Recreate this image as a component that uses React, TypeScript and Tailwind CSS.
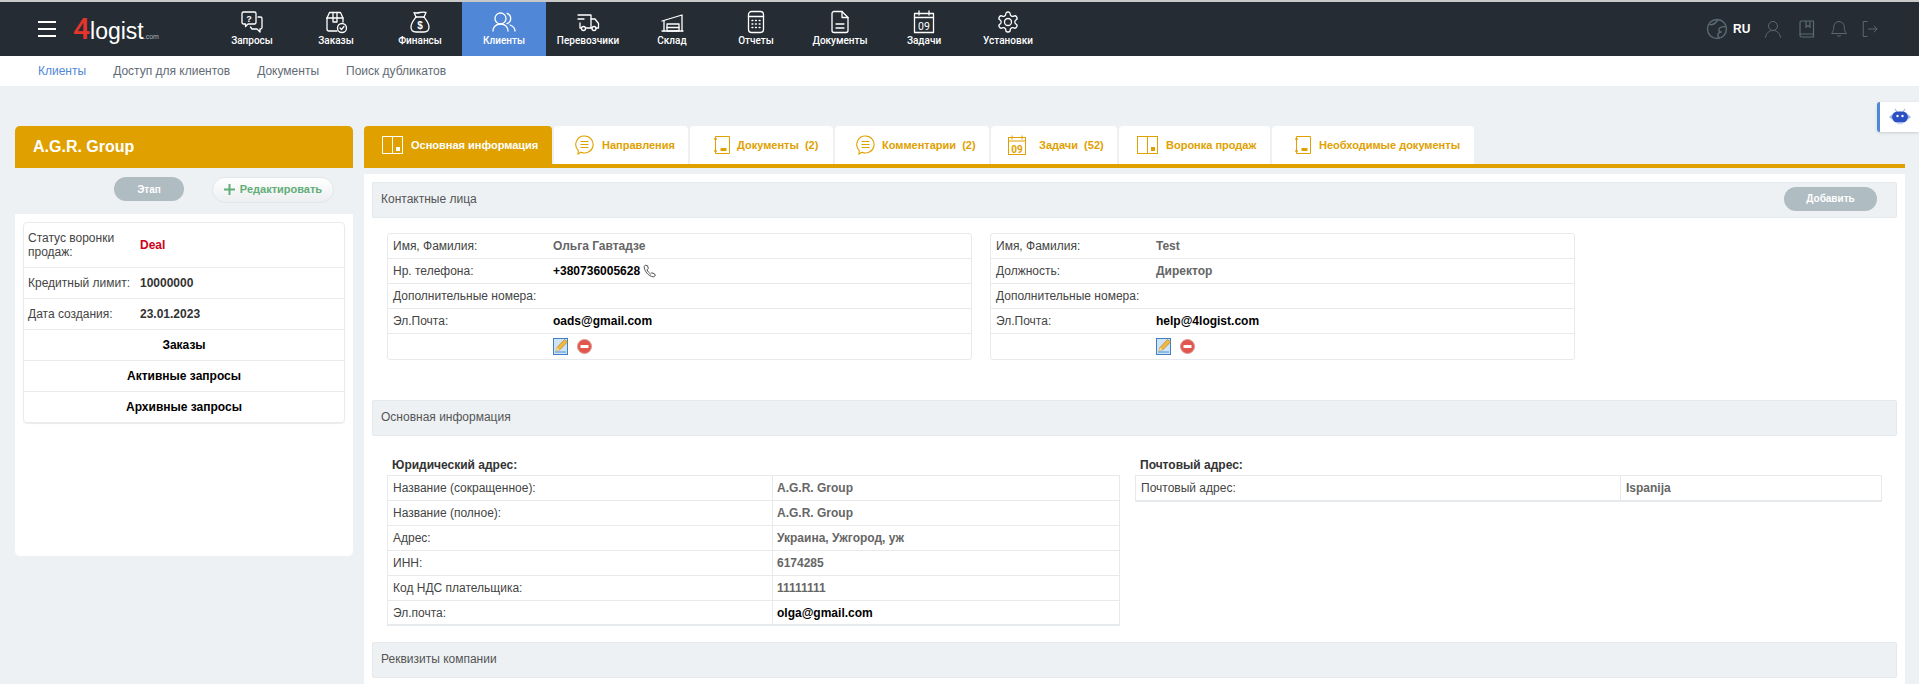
import type { ReactNode } from "react"

function Svg({ size, vb, className, children }: { size: number; vb?: string; className?: string; children: ReactNode }) {
  return (
    <svg width={size} height={size} viewBox={vb ?? "0 0 24 24"} fill="none" stroke="currentColor" strokeWidth={1.3} strokeLinecap="round" strokeLinejoin="round" className={className}>
      {children}
    </svg>
  )
}

const navIcons: Record<string, ReactNode> = {
  requests: (
    <Svg size={24}>
      <path d="M3.5 2h11a1.500 1.500 0 0 1 1.500 1.500v9a1.500 1.500 0 0 1-1.500 1.500H8l-2.500 2.500V14h-2A1.500 1.500 0 0 1 2 12.500v-9A1.500 1.500 0 0 1 3.500 2z" />
      <path d="M18 7h2.500A1.500 1.500 0 0 1 22 8.500v9a1.500 1.500 0 0 1-1.500 1.500H20v3l-3-3h-5l-1.500-2" />
      <text x="9" y="11.500" fontSize="9" fontWeight="700" fill="currentColor" stroke="none" textAnchor="middle" fontFamily="Liberation Sans, sans-serif">?</text>
    </Svg>
  ),
  orders: (
    <Svg size={24}>
      <path d="M3 8l2.500-5.500h11L19 8v4" />
      <path d="M3 8v11a2 2 0 0 0 2 2h8" />
      <path d="M3 8h16" />
      <path d="M9 2.500V12h4V2.500" />
      <circle cx="18" cy="18" r="4.500" />
      <path d="M16 18l1.500 1.500 2.500-3" />
    </Svg>
  ),
  finance: (
    <Svg size={24}>
      <path d="M8 7L6 2.500c2 1 4 .5 6 0s4-.5 6 0L16 7" />
      <path d="M8 7h8" />
      <path d="M8 7c-2 3-5 6-5 10 0 3 2 5 5 5h8c3 0 5-2 5-5 0-4-3-7-5-10" />
      <text x="12" y="19" fontSize="10" fontWeight="700" fill="currentColor" stroke="none" textAnchor="middle" fontFamily="Liberation Sans, sans-serif">$</text>
    </Svg>
  ),
  clients: (
    <Svg size={24}>
      <circle cx="8.500" cy="8.500" r="5.500" />
      <path d="M1 21c0-4 3-7 7.500-7s7.500 3 7.500 7" />
      <path d="M15 3.300a5.500 5.500 0 0 1 0 10.400" />
      <path d="M18 15c2.500 1 5 3 5 6" />
    </Svg>
  ),
  carriers: (
    <Svg size={24}>
      <path d="M2 5h13v13H9.500" />
      <path d="M2 9h6" />
      <path d="M4 13v5h1" />
      <path d="M15 9h4l3.500 4.500V18H20" />
      <path d="M15 18h1" />
      <circle cx="7.500" cy="18.500" r="2" />
      <circle cx="18" cy="18.500" r="2" />
    </Svg>
  ),
  warehouse: (
    <Svg size={24}>
      <path d="M2 11l20-6v16" />
      <path d="M2 21h21" />
      <path d="M4 11v10" />
      <path d="M7 14h12v7H7z" />
      <path d="M7 17.500h12" />
    </Svg>
  ),
  reports: (
    <Svg size={24}>
      <rect x="4.500" y="1.500" width="15" height="21" rx="3" />
      <path d="M4.500 6.500h15" />
      <path d="M8 10.500h.8M11.500 10.500h.8M15.200 10.500h.8M8 14h.8M11.500 14h.8M15.200 14h.8M8 17.500h.8M11.500 17.500h.8M15.200 17.500h.8" strokeWidth={1.5} />
    </Svg>
  ),
  documents: (
    <Svg size={24}>
      <path d="M6 1.500h8l6 6v13a2 2 0 0 1-2 2H6a2 2 0 0 1-2-2v-17a2 2 0 0 1 2-2z" />
      <path d="M14 1.500v6h6" />
      <path d="M8 14h8M8 18h8" />
    </Svg>
  ),
  tasks: (
    <Svg size={24}>
      <rect x="2.500" y="3.500" width="19" height="19" />
      <path d="M2.500 7.500h19" />
      <path d="M7 1v4M17 1v4" />
      <text x="12" y="19.500" fontSize="10.500" fill="currentColor" stroke="none" textAnchor="middle" fontFamily="Roboto, sans-serif">09</text>
    </Svg>
  ),
  settings: (
    <Svg size={24}>
      <path d="M12.220 2h-.44a2 2 0 0 0-2 2v.18a2 2 0 0 1-1 1.730l-.43.250a2 2 0 0 1-2 0l-.15-.080a2 2 0 0 0-2.730.730l-.22.380a2 2 0 0 0 .730 2.730l.150.100a2 2 0 0 1 1 1.720v.510a2 2 0 0 1-1 1.740l-.150.090a2 2 0 0 0-.730 2.730l.220.380a2 2 0 0 0 2.730.730l.150-.080a2 2 0 0 1 2 0l.430.250a2 2 0 0 1 1 1.730V20a2 2 0 0 0 2 2h.44a2 2 0 0 0 2-2v-.18a2 2 0 0 1 1-1.730l.430-.250a2 2 0 0 1 2 0l.150.080a2 2 0 0 0 2.730-.730l.220-.390a2 2 0 0 0-.730-2.730l-.150-.080a2 2 0 0 1-1-1.740v-.500a2 2 0 0 1 1-1.740l.150-.090a2 2 0 0 0 .730-2.730l-.220-.380a2 2 0 0 0-2.730-.730l-.150.080a2 2 0 0 1-2 0l-.430-.250a2 2 0 0 1-1-1.730V4a2 2 0 0 0-2-2z" />
      <circle cx="12" cy="12" r="3.500" />
    </Svg>
  ),
}

const navItems = [
  { key: "requests", label: "Запросы" },
  { key: "orders", label: "Заказы" },
  { key: "finance", label: "Финансы" },
  { key: "clients", label: "Клиенты", active: true },
  { key: "carriers", label: "Перевозчики" },
  { key: "warehouse", label: "Склад" },
  { key: "reports", label: "Отчеты" },
  { key: "documents", label: "Документы" },
  { key: "tasks", label: "Задачи" },
  { key: "settings", label: "Установки" },
]

function LayoutIcon() {
  return (
    <svg width={21} height={18} viewBox="0 0 21 18" fill="none" stroke="currentColor" strokeWidth={1}>
      <rect x="0.500" y="0.500" width="20" height="17" />
      <path d="M10.500 0.500v17" />
      <rect x="14" y="11" width="4" height="4" fill="currentColor" stroke="none" />
    </svg>
  )
}

function DocIcon() {
  return (
    <svg width={16} height={18} viewBox="0 0 16 18" fill="none" stroke="currentColor" strokeWidth={1}>
      <path d="M1.500 0.500h14v17h-14z" />
      <circle cx="1.500" cy="3" r="1.300" fill="currentColor" stroke="none" />
      <circle cx="1.500" cy="15" r="1.300" fill="currentColor" stroke="none" />
      <rect x="6.500" y="12" width="6" height="3" fill="currentColor" stroke="none" />
    </svg>
  )
}

function ChatIcon() {
  return (
    <svg width={20} height={20} viewBox="0 0 20 20" fill="none" stroke="currentColor" strokeWidth={1.1}>
      <path d="M10.500 1a8.500 8.500 0 1 1-3.500 16.200L4 19l.3-3.500A8.500 8.500 0 0 1 10.500 1z" />
      <path d="M6.500 6.500h8M6.500 9.500h8M6.500 12.500h8" />
    </svg>
  )
}

function CalIcon() {
  return (
    <svg width={18} height={20} viewBox="0 0 18 20" fill="none" stroke="currentColor" strokeWidth={1}>
      <rect x="0.500" y="2.500" width="17" height="17" />
      <path d="M0.500 6h17M4 0.500v4M14 0.500v4" />
      <text x="9" y="17.500" fontSize="10" fill="currentColor" stroke="none" textAnchor="middle" fontFamily="Roboto, sans-serif">09</text>
    </svg>
  )
}

const tabs = [
  { label: "Основная информация", w: "w-[188px]", pl: "pl-[18px]", gap: "gap-[8px]", icon: <LayoutIcon />, active: true },
  { label: "Направления", w: "w-[134px]", pl: "pl-[20px]", gap: "gap-[8px]", icon: <ChatIcon /> },
  { label: "Документы  (2)", w: "w-[143px]", pl: "pl-[24px]", gap: "gap-[7px]", icon: <DocIcon /> },
  { label: "Комментарии  (2)", w: "w-[154px]", pl: "pl-[20px]", gap: "gap-[7px]", icon: <ChatIcon /> },
  { label: "Задачи  (52)", w: "w-[126px]", pl: "pl-[17px]", gap: "gap-[13px]", icon: <CalIcon /> },
  { label: "Воронка продаж", w: "w-[151px]", pl: "pl-[18px]", gap: "gap-[8px]", icon: <LayoutIcon /> },
  { label: "Необходимые документы", w: "w-[202px]", pl: "pl-[23px]", gap: "gap-[8px]", icon: <DocIcon /> },
]

function EditIcon() {
  return (
    <svg width={16} height={17} viewBox="0 0 16 17">
      <rect x="0.500" y="0.500" width="14" height="16" fill="#cfe3f7" stroke="#3f7fc4" />
      <rect x="2" y="13" width="11" height="2" fill="#8dbbe8" />
      <path d="M3 13l1-3.500L11.500 1.500 14.500 4 6.500 12z" fill="#eeb93e" stroke="#b9812a" strokeWidth={0.7} />
      <path d="M3 13l1-3.500 2.500 2.500z" fill="#f7e2b0" />
    </svg>
  )
}

function StopIcon() {
  return (
    <svg width={15} height={15} viewBox="0 0 15 15">
      <circle cx="7.500" cy="7.500" r="7" fill="#e2574c" stroke="#d99a94" strokeWidth={1} />
      <rect x="3.500" y="6" width="8" height="3" fill="#fff" />
    </svg>
  )
}

function PhoneIcon() {
  return (
    <svg width={14} height={14} viewBox="0 0 24 24" fill="none" stroke="#444" strokeWidth={1.6} strokeLinejoin="round">
      <path d="M4 2l4 1 1 5-2 2c1 3 3 5 6 7l2-2 5 2 1 3-3 2C9 21 2 12 2 4z" />
    </svg>
  )
}

function SectionHeader({ title, action }: { title: string; action?: string }) {
  return (
    <div className="flex h-[36px] items-center justify-between rounded-[2px] border border-[#e4e9ec] bg-[#edf1f4] pb-[3px] pl-[8px] pr-[19px] text-[12px] text-[#555]">
      <span>{title}</span>
      {action && (
        <button type="button" className="h-[24px] w-[93px] rounded-full bg-[#afbcc1] text-[10px] font-bold text-white">
          {action}
        </button>
      )}
    </div>
  )
}

function ContactCard({ rows }: { rows: { label: string; value?: string; strong?: boolean; phone?: boolean }[] }) {
  return (
    <div className="w-[585px] rounded-[3px] border border-[#e6eaed] text-[12px] text-[#444]">
      {rows.map((r) => (
        <div key={r.label} className="flex h-[25px] items-center border-b border-[#e6eaed] pl-[5px]">
          <span className="w-[160px]">{r.label}</span>
          {r.value && (
            <span className={r.strong ? "flex items-center gap-[3px] font-bold text-black" : "font-bold text-[#666]"}>
              {r.value}
              {r.phone && <PhoneIcon />}
            </span>
          )}
        </div>
      ))}
      <div className="flex h-[25px] items-center gap-[8px] pl-[165px]">
        <EditIcon />
        <StopIcon />
      </div>
    </div>
  )
}

const legalRows = [
  { label: "Название (сокращенное):", value: "A.G.R. Group" },
  { label: "Название (полное):", value: "A.G.R. Group" },
  { label: "Адрес:", value: "Украина, Ужгород, уж" },
  { label: "ИНН:", value: "6174285" },
  { label: "Код НДС плательщика:", value: "11111111" },
  { label: "Эл.почта:", value: "olga@gmail.com", strong: true },
]

const sideRows = [
  { label: "Кредитный лимит:", value: "10000000" },
  { label: "Дата создания:", value: "23.01.2023" },
]

export default function App() {
  return (
    <div className="h-[684px] w-full overflow-hidden bg-[#edf1f4] font-['Liberation_Sans',Arial,sans-serif]">
      <div className="h-[2px] bg-[#c9c9c9]" />
      <header className="flex h-[54px] items-stretch bg-[#252c33] text-white">
        <div className="flex w-[210px] shrink-0 items-center pl-[38px]">
          <div className="flex w-[18px] flex-col gap-[5px]">
            <span className="h-[2px] bg-white" />
            <span className="h-[2px] bg-white" />
            <span className="h-[2px] bg-white" />
          </div>
          <div className="ml-[17px] flex items-baseline leading-none">
            <span className="font-['Roboto',sans-serif] text-[30px] font-medium text-[#e5352b]">4</span>
            <span className="text-[23px] text-white">logist</span>
            <span className="text-[7px] text-[#aab2b8]">.com</span>
          </div>
        </div>
        {navItems.map((item) => (
          <div key={item.key} className={"flex w-[84px] flex-col items-center pt-[8px] " + (item.active ? "bg-[#5187d7]" : "")}>
            {navIcons[item.key]}
            <span className="font-['Roboto',sans-serif] text-[10px] font-medium leading-[14px] whitespace-nowrap">{item.label}</span>
          </div>
        ))}
        <div className="ml-auto flex items-center pr-[40px] text-[#5b6a75]">
          <svg width={22} height={22} viewBox="0 0 22 22" fill="none" stroke="currentColor" strokeWidth={1.4}>
            <circle cx="11" cy="11" r="9.500" />
            <path d="M3 6c4 3 7-2 9-4M20 9c-3-1-6 0-7 2s1 3 2 3-2 0-3 2 1 4 2 4" />
          </svg>
          <span className="ml-[5px] w-[31px] text-[12px] font-bold text-white">RU</span>
          <Svg size={18}>
            <circle cx="12" cy="8" r="6" />
            <path d="M2 23c1-6 5-9 10-9s9 3 10 9" />
          </Svg>
          <svg width={16} height={18} viewBox="0 0 16 18" fill="none" stroke="currentColor" strokeWidth={1.2} className="ml-[17px]">
            <path d="M2.500 1h12v13h-12a1.500 1.500 0 0 0 0 3h12v-3M1 15.500V2.500A1.500 1.500 0 0 1 2.500 1" />
            <path d="M7 1v6l2-1.500L11 7V1" />
          </svg>
          <Svg size={18} className="ml-[15px]">
            <path d="M12 2a7 7 0 0 0-7 7c0 6-3 9-3 9h20s-3-3-3-9a7 7 0 0 0-7-7z" />
            <path d="M9.500 20.500a3 3 0 0 0 5 0" />
          </Svg>
          <Svg size={18} className="ml-[13px]">
            <path d="M8 2H3v20h5" />
            <path d="M10 12h11M17.500 8l4 4-4 4" />
          </Svg>
        </div>
      </header>
      <nav className="flex h-[30px] items-center bg-white pl-[38px] text-[12px] text-[#5f6b75]">
        <span className="text-[#5187d7]">Клиенты</span>
        <span className="ml-[27px]">Доступ для клиентов</span>
        <span className="ml-[27px]">Документы</span>
        <span className="ml-[27px]">Поиск дубликатов</span>
      </nav>
      <div className="relative flex gap-[11px] pl-[15px] pt-[40px]">
        <div className="absolute right-0 top-[16px] flex h-[30px] w-[42px] items-center justify-center rounded-l-[3px] border-l-[3px] border-[#5187d7] bg-white shadow-[0_1px_3px_rgba(0,0,0,0.15)]">
          <svg width={24} height={18} viewBox="0 0 22 18">
            <path d="M0 9l3-2.500v5zM22 9l-3-2.500v5z" fill="#9db6ea" />
            <path d="M6 1l2 3M16 1l-2 3" stroke="#9db6ea" strokeWidth={1.2} />
            <rect x="3" y="3.500" width="16" height="11" rx="5.500" fill="#2a50c4" />
            <circle cx="8.500" cy="8" r="1.200" fill="#fff" />
            <circle cx="13.500" cy="8" r="1.200" fill="#fff" />
            <path d="M8 15.500h6" stroke="#cbd7f5" strokeWidth={1.5} />
          </svg>
        </div>
        <aside className="w-[338px] shrink-0">
          <div className="flex h-[42px] items-center rounded-t-[5px] bg-[#e0a100] pl-[18px] text-[16px] font-bold text-white">A.G.R. Group</div>
          <div className="flex h-[46px] items-start gap-[28px] pl-[99px] pt-[9px]">
            <button type="button" className="h-[24px] w-[70px] rounded-full bg-[#afbcc1] text-[10px] font-bold text-white">Этап</button>
            <button type="button" className="flex h-[26px] w-[122px] items-center justify-center gap-[5px] rounded-full border border-[#e3e7ea] bg-gradient-to-b from-white to-[#eceef0] pb-[2px] text-[11px] font-bold text-[#62ad77]">
              <svg width={11} height={11} viewBox="0 0 11 11" stroke="currentColor" strokeWidth={2}>
                <path d="M5.500 0v11M0 5.500h11" />
              </svg>
              Редактировать
            </button>
          </div>
          <div className="h-[342px] rounded-b-[5px] bg-white px-[8px] pt-[8px]">
            <div className="rounded-[4px] border border-[#e8ecef] text-[12px] text-[#444] shadow-[0_1px_1px_rgba(0,0,0,0.08)]">
              <div className="flex h-[45px] items-center border-b border-[#e8ecef] pl-[4px]">
                <span className="w-[112px] leading-[14px]">Статус воронки<br />продаж:</span>
                <span className="font-bold text-[#d0021b]">Deal</span>
              </div>
              {sideRows.map((r) => (
                <div key={r.label} className="flex h-[31px] items-center border-b border-[#e8ecef] pl-[4px]">
                  <span className="w-[112px] whitespace-nowrap">{r.label}</span>
                  <span className="font-bold text-[#333]">{r.value}</span>
                </div>
              ))}
              {["Заказы", "Активные запросы", "Архивные запросы"].map((label, i) => (
                <div key={label} className={"flex items-center justify-center font-bold text-black " + (i < 2 ? "h-[31px] border-b border-[#e8ecef]" : "h-[30px]")}>
                  {label}
                </div>
              ))}
            </div>
          </div>
        </aside>
        <main className="w-[1541px] shrink-0">
          <div className="flex h-[38px] gap-[2px]">
            {tabs.map((tab) => (
              <div
                key={tab.label}
                className={
                  "flex items-center whitespace-pre rounded-t-[4px] text-[11px] font-bold " +
                  tab.w + " " + tab.pl + " " + tab.gap + " " +
                  (tab.active ? "bg-[#e0a100] text-white" : "bg-white text-[#e0a100]")
                }
              >
                {tab.icon}
                <span>{tab.label}</span>
              </div>
            ))}
          </div>
          <div className="h-[4px] bg-[#e0a100]" />
          <div className="mt-[6px] h-[520px] bg-white px-[8px] pt-[8px]">
            <SectionHeader title="Контактные лица" action="Добавить" />
            <div className="mt-[15px] flex gap-[18px] pl-[15px]">
              <ContactCard
                rows={[
                  { label: "Имя, Фамилия:", value: "Ольга Гавтадзе" },
                  { label: "Нр. телефона:", value: "+380736005628", strong: true, phone: true },
                  { label: "Дополнительные номера:" },
                  { label: "Эл.Почта:", value: "oads@gmail.com", strong: true },
                ]}
              />
              <ContactCard
                rows={[
                  { label: "Имя, Фамилия:", value: "Test" },
                  { label: "Должность:", value: "Директор" },
                  { label: "Дополнительные номера:" },
                  { label: "Эл.Почта:", value: "help@4logist.com", strong: true },
                ]}
              />
            </div>
            <div className="mt-[40px]">
              <SectionHeader title="Основная информация" />
            </div>
            <div className="mt-[20px] flex pl-[15px] text-[12px] text-[#444]">
              <div className="w-[733px]">
                <div className="h-[19px] pl-[5px] font-bold text-[#333]">Юридический адрес:</div>
                <div className="border border-b-2 border-[#e6eaed]">
                  {legalRows.map((r, i) => (
                    <div key={r.label} className={"flex items-center " + (i < 5 ? "h-[25px] border-b border-[#e6eaed]" : "h-[23px]")}>
                      <span className="h-full w-[385px] border-r border-[#e6eaed] pl-[5px] leading-[24px]">{r.label}</span>
                      <span className={"pl-[4px] font-bold " + (r.strong ? "text-black" : "text-[#666]")}>{r.value}</span>
                    </div>
                  ))}
                </div>
              </div>
              <div className="ml-[15px] w-[747px]">
                <div className="h-[19px] pl-[5px] font-bold text-[#333]">Почтовый адрес:</div>
                <div className="flex h-[27px] items-center border border-b-2 border-[#e6eaed]">
                  <span className="h-full w-[485px] border-r border-[#e6eaed] pl-[5px] leading-[24px]">Почтовый адрес:</span>
                  <span className="pl-[5px] font-bold text-[#666]">Ispanija</span>
                </div>
              </div>
            </div>
            <div className="mt-[16px]">
              <SectionHeader title="Реквизиты компании" />
            </div>
          </div>
        </main>
      </div>
    </div>
  )
}
